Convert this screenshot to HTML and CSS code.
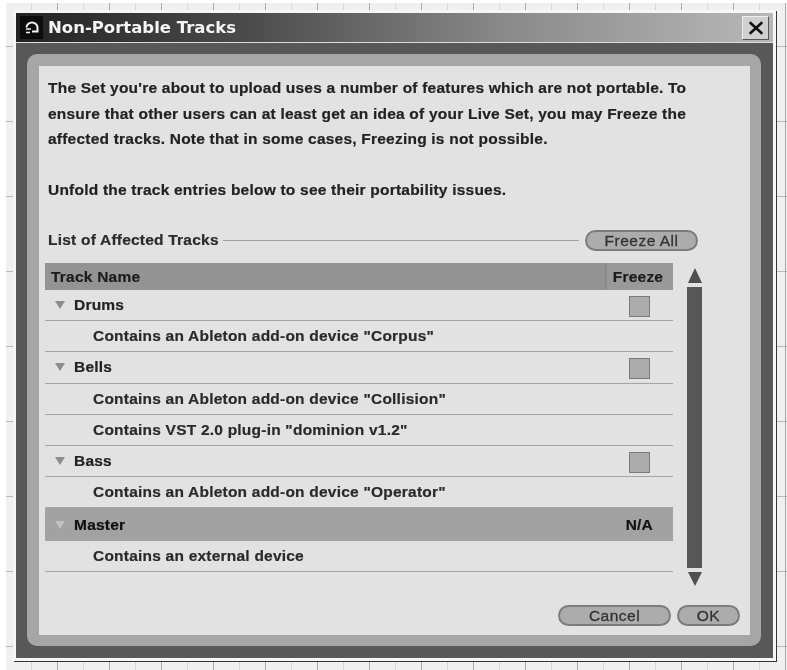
FILE: index.html
```html
<!DOCTYPE html>
<html lang="en">
<head>
<meta charset="utf-8">
<title>Non-Portable Tracks</title>
<link rel="stylesheet" href="styles.css">
</head>
<body>
<div class="window">
  <header class="titlebar">
    <span class="app-icon">
      <svg viewBox="0 0 16 16" width="16" height="16"><path d="M2.5 7.5 A5.5 5 0 0 1 13.5 7.5 V11.5 H8" fill="none" stroke="#f4f4f4" stroke-width="2"/><path d="M2 9 H7 M2 12.5 H6" fill="none" stroke="#f4f4f4" stroke-width="1.5"/></svg>
    </span>
    <h1 class="title">Non-Portable Tracks</h1>
    <button class="close" aria-label="Close">
      <svg viewBox="0 0 14 14" width="16" height="16"><path d="M1.5 2 L12.5 12 M12.5 2 L1.5 12" stroke="#111" stroke-width="2.2" fill="none"/></svg>
    </button>
  </header>
  <div class="frame">
    <div class="band">
      <main class="panel">
        <p class="intro">The Set you're about to upload uses a number of features which are not portable. To<br>ensure that other users can at least get an idea of your Live Set, you may Freeze the<br>affected tracks. Note that in some cases, Freezing is not possible.</p>
        <p class="intro unfold">Unfold the track entries below to see their portability issues.</p>
        <div class="listhead">
          <span class="listlabel">List of Affected Tracks</span>
          <span class="rule"></span>
          <button class="pill freezeall">Freeze All</button>
        </div>
        <div class="listarea">
          <div class="table">
            <div class="thead"><span class="th-name">Track Name</span><span class="th-freeze">Freeze</span></div>
            <div class="row track"><span class="tri"></span><span class="tname">Drums</span><span class="check"></span></div>
            <div class="row issue">Contains an Ableton add-on device "Corpus"</div>
            <div class="row track"><span class="tri"></span><span class="tname">Bells</span><span class="check"></span></div>
            <div class="row issue">Contains an Ableton add-on device "Collision"</div>
            <div class="row issue">Contains VST 2.0 plug-in "dominion v1.2"</div>
            <div class="row track"><span class="tri"></span><span class="tname">Bass</span><span class="check"></span></div>
            <div class="row issue">Contains an Ableton add-on device "Operator"</div>
            <div class="row track master"><span class="tri"></span><span class="tname">Master</span><span class="na">N/A</span></div>
            <div class="row issue">Contains an external device</div>
          </div>
          <div class="scroll">
            <span class="arrow up"></span>
            <span class="thumb"></span>
            <span class="arrow down"></span>
          </div>
        </div>
        <div class="actions">
          <button class="pill cancel">Cancel</button>
          <button class="pill ok">OK</button>
        </div>
      </main>
    </div>
  </div>
</div>
</body>
</html>
```
FILE: styles.css
```css
* { box-sizing: border-box; }
html, body { margin: 0; padding: 0; }
body {
  width: 787px;
  height: 670px;
  overflow: hidden;
  padding: 10px 0 0 13px;
  background-color: #fff;
  background-image:
    repeating-linear-gradient(90deg, transparent 0 25px, #d8d8d8 25px 26px, transparent 26px 51px, #a8a8a8 51px 52px),
    repeating-linear-gradient(180deg, transparent 0 43px, #b8b8b8 43px 44px, transparent 44px 75px),
    linear-gradient(#f0f0f0, #f0f0f0);
  background-size: 781px 667px, 781px 667px, 781px 667px;
  background-position: 6px 3px, 6px 3px, 6px 3px;
  background-repeat: no-repeat;
  font-family: "Liberation Sans", Arial, sans-serif;
  color: #222;
}
.window {
  width: 763px;
  height: 651px;
  padding: 3px;
  background: #f6f6f6;
  box-shadow: 1px 1px 0 #333;
  display: flex;
  flex-direction: column;
  filter: blur(0.5px);
}
.titlebar {
  height: 30px;
  flex: none;
  display: flex;
  align-items: center;
  padding: 0 4px;
  background: linear-gradient(90deg, #232323 0%, #4a4a4a 30%, #8a8a8a 65%, #b8b8b8 100%);
  border-bottom: 1px solid #ddd;
}
.app-icon {
  width: 23px;
  height: 23px;
  background: #0c0c0c;
  display: flex;
  align-items: center;
  justify-content: center;
}
.title {
  margin: 0 0 0 5px;
  flex: 1;
  font: bold 16.5px "DejaVu Sans", sans-serif;
  color: #f5f5f5;
}
.close {
  width: 27px;
  height: 24px;
  padding: 0;
  display: flex;
  align-items: center;
  justify-content: center;
  background: #cfcfcf;
  border: 1px solid;
  border-color: #eee #555 #555 #eee;
}
.frame {
  flex: 1;
  background: #585858;
  padding: 11px 12px 12px 11px;
  display: flex;
  min-height: 0;
}
.band {
  flex: 1;
  background: #a6a6a6;
  border-radius: 10px;
  padding: 12px 11px 11px 12px;
  display: flex;
}
.panel {
  flex: 1;
  background: #e2e2e2;
  padding: 9px 10px 0 6px;
  display: flex;
  flex-direction: column;
  font-size: 15.5px;
  letter-spacing: 0.22px;
  font-weight: bold;
  -webkit-text-stroke: 0.2px currentColor;
}
.intro {
  margin: 0 0 0 3px;
  line-height: 25.5px;
}
.unfold { margin-top: 25px; }
.listhead {
  display: flex;
  align-items: center;
  margin: 28px 42px 0 3px;
  height: 20px;
}
.listlabel { color: #2c2c2c; }
.rule { flex: 1; height: 1px; background: #a0a0a0; margin: 0 6px 0 4px; }
.pill {
  font: 15.5px "Liberation Sans", Arial, sans-serif;
  letter-spacing: 0.5px;
  -webkit-text-stroke: 0.3px #333;
  color: #333;
  background: #acacac;
  border: 2px solid #7c7c7c;
  border-radius: 11px;
  height: 21px;
  padding: 0;
}
.freezeall { width: 113px; flex: none; }
.listarea { display: flex; margin-top: 13px; }
.table { width: 628px; flex: none; }
.thead {
  height: 27px;
  display: flex;
  background: #939393;
  color: #1c1c1c;
  line-height: 27px;
}
.th-name { flex: 1; padding-left: 6px; }
.th-freeze { width: 68px; padding-right: 4px; text-align: center; border-left: 2px solid #8a8a8a; background: #999; }
.row {
  height: 31.2px;
  display: flex;
  align-items: center;
  border-bottom: 1px solid #a4a4a4;
}
.issue { padding-left: 48px; color: #2a2a2a; }
.tri {
  width: 0;
  height: 0;
  margin-left: 10px;
  border-left: 5px solid transparent;
  border-right: 5px solid transparent;
  border-top: 8px solid #8c8c8c;
}
.tname { flex: 1; margin-left: 9px; color: #222; }
.check {
  width: 21px;
  height: 21px;
  margin-right: 23px;
  margin-top: 2px;
  background: #acacac;
  border: 1px solid #7a7a7a;
}
.master { background: #a2a2a2; border-bottom: none; height: 32.6px; }
.master .tri { border-top-color: #c2c2c2; }
.master .tname { color: #111; }
.na { margin-right: 20px; color: #111; }
.scroll {
  width: 15px;
  margin-left: 14px;
  margin-top: 5px;
  display: flex;
  flex-direction: column;
  align-items: center;
}
.arrow {
  width: 0;
  height: 0;
  border-left: 7.5px solid transparent;
  border-right: 7.5px solid transparent;
}
.up { border-bottom: 15px solid #4f4f4f; }
.down { border-top: 14px solid #4f4f4f; }
.thumb { width: 15px; height: 281px; margin: 4px 0; background: #575757; }
.actions {
  margin-top: auto;
  margin-bottom: 9px;
  display: flex;
  justify-content: flex-end;
  gap: 6px;
}
.cancel { width: 113px; }
.ok { width: 63px; }
```
